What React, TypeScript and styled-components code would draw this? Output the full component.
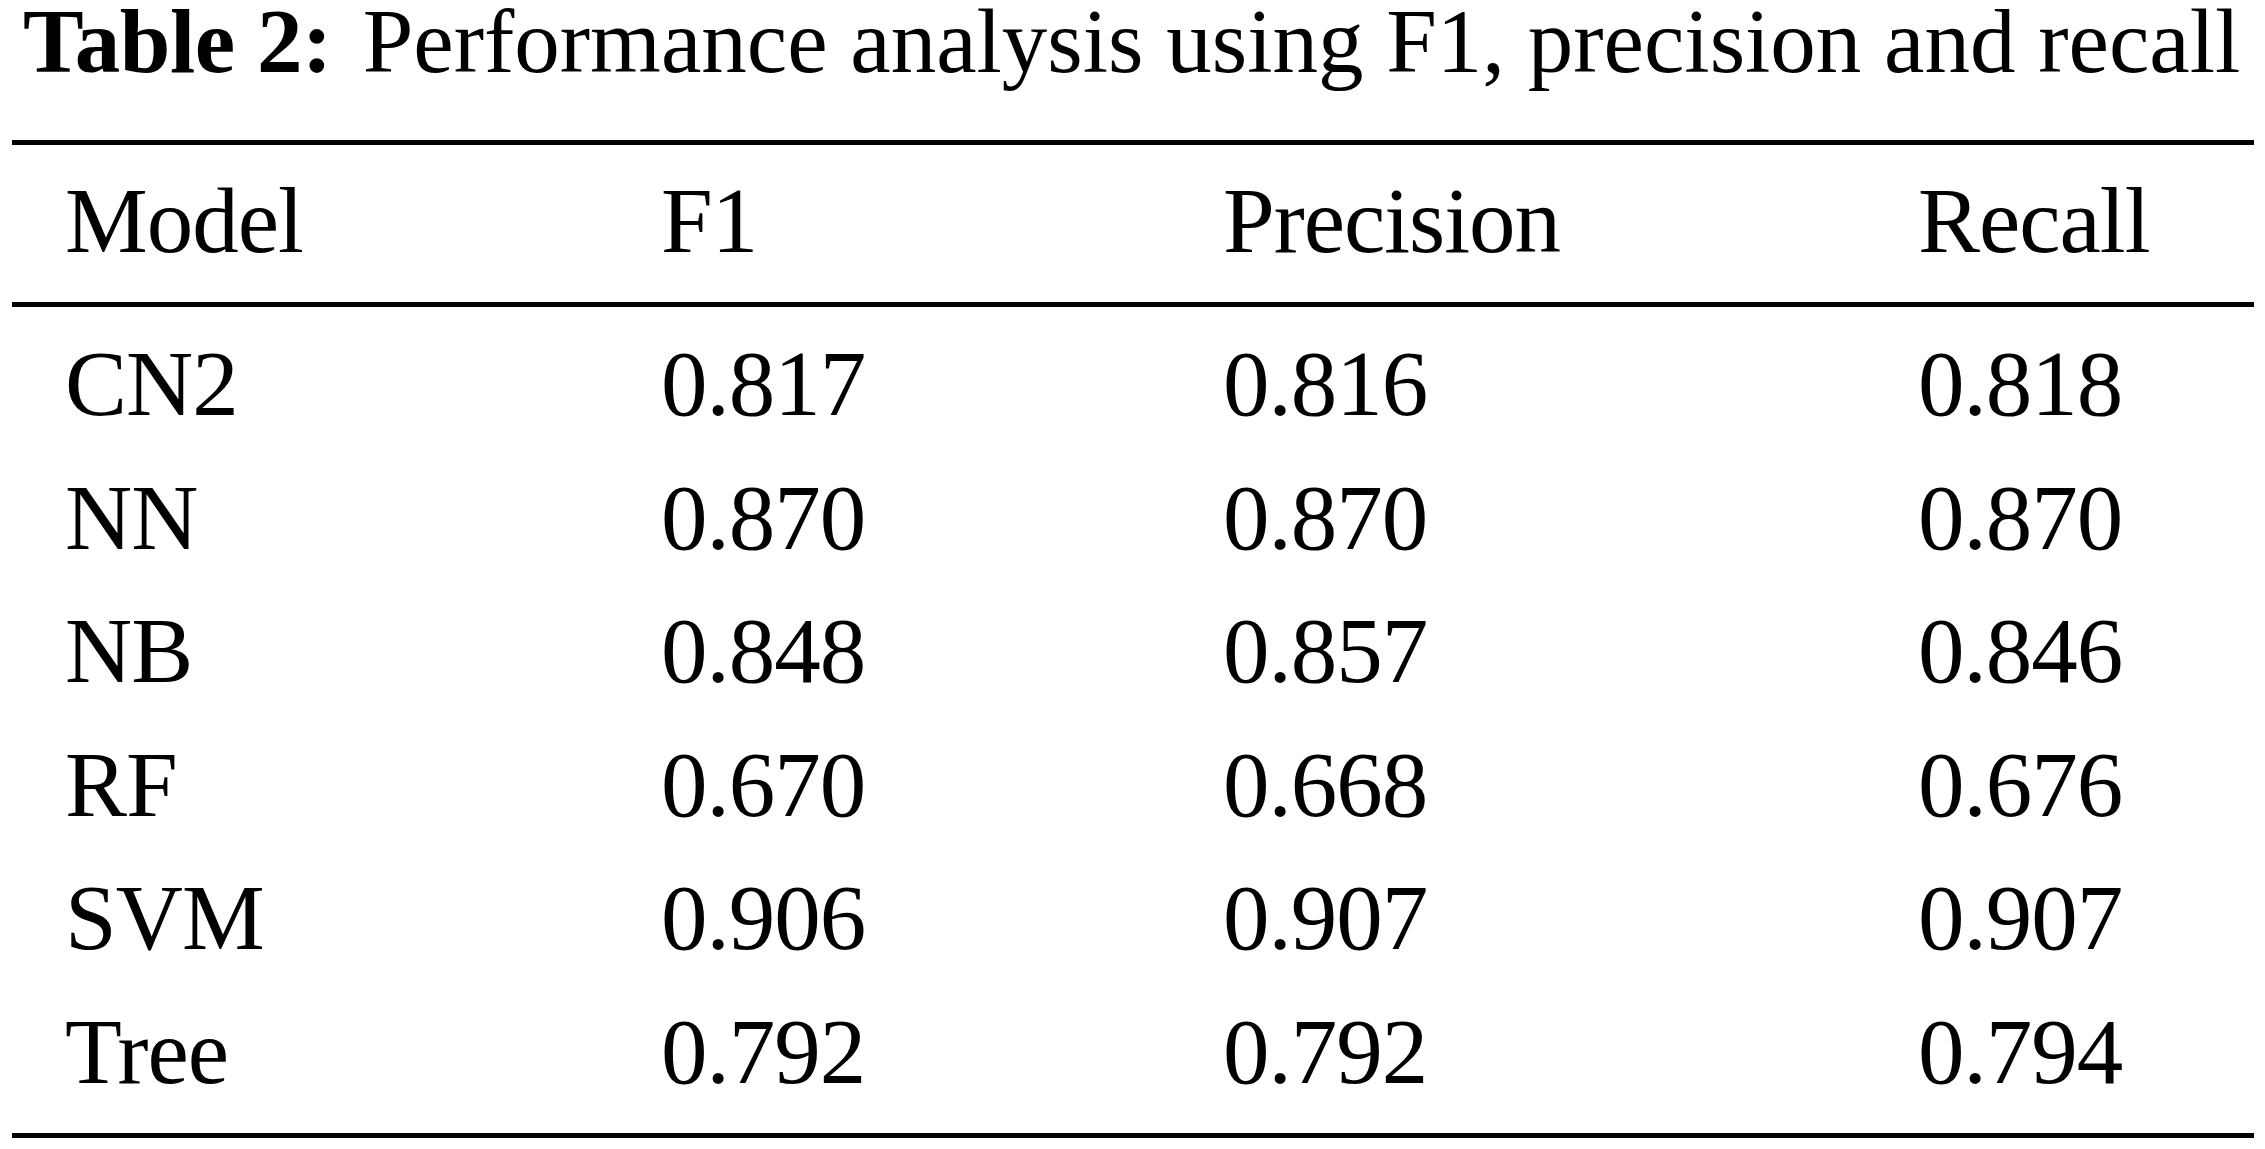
import React from "react";
import styled, { createGlobalStyle } from "styled-components";

const GlobalStyle = createGlobalStyle`
  html, body {
    margin: 0;
    padding: 0;
    background: #fff;
  }
  body {
    font-family: "Liberation Serif", "Times New Roman", serif;
    color: #000;
  }
`;

const Page = styled.div`
  padding: 0 11px 0 12px;
`;

const Caption = styled.div`
  height: 84px;
  line-height: 84px;
  font-size: 91px;
  padding-left: 11px;
  white-space: nowrap;
  & b {
    font-weight: 700;
    letter-spacing: -0.5px;
  }
  & span {
    margin-left: 31px;
  }
`;

const Rule = styled.div<{ $top?: number }>`
  height: 5px;
  background: #000;
  margin-top: ${(p) => p.$top ?? 0}px;
`;

const Row = styled.div<{ $height: number; $gapBelow?: number }>`
  display: grid;
  grid-template-columns: 596px 562px 695px 1fr;
  padding-left: 53px;
  height: ${(p) => p.$height}px;
  line-height: ${(p) => p.$height}px;
  margin-bottom: ${(p) => p.$gapBelow ?? 0}px;
  font-size: 93px;
  letter-spacing: -1px;
  white-space: nowrap;
`;

const Body = styled.div`
  padding: 10px 0 15px;
`;

const rows = [
  ["CN2", "0.817", "0.816", "0.818"],
  ["NN", "0.870", "0.870", "0.870"],
  ["NB", "0.848", "0.857", "0.846"],
  ["RF", "0.670", "0.668", "0.676"],
  ["SVM", "0.906", "0.907", "0.907"],
  ["Tree", "0.792", "0.792", "0.794"],
];

export default function App() {
  return (
    <Page>
      <GlobalStyle />
      <Caption>
        <b>Table 2:</b>
        <span>Performance analysis using F1, precision and recall</span>
      </Caption>
      <Rule $top={56} />
      <Row $height={151} $gapBelow={6}>
        <div>Model</div>
        <div>F1</div>
        <div>Precision</div>
        <div>Recall</div>
      </Row>
      <Rule />
      <Body>
        {rows.map((r) => (
          <Row key={r[0]} $height={133.5}>
            {r.map((c, i) => (
              <div key={i}>{c}</div>
            ))}
          </Row>
        ))}
      </Body>
      <Rule />
    </Page>
  );
}
